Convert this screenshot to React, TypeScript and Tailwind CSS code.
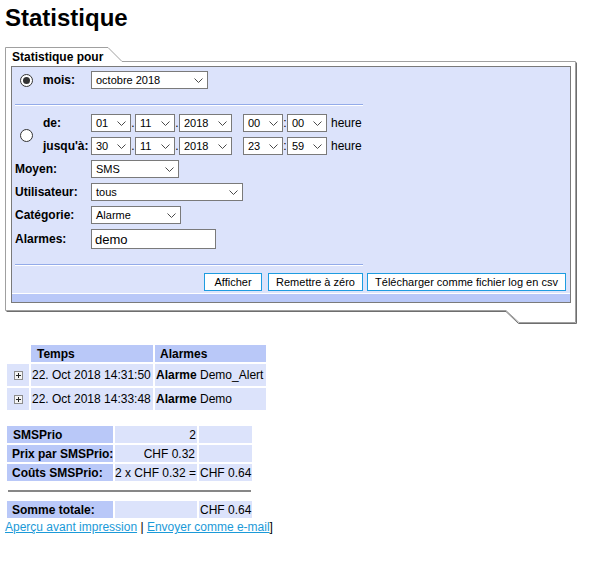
import React from "react";

function Chevron() {
  return (
    <svg width="9" height="5" viewBox="0 0 9 5" className="shrink-0">
      <path d="M0.5 0.5 L4.5 4.5 L8.5 0.5" stroke="#4a4a4a" strokeWidth="1" fill="none" />
    </svg>
  );
}

function Select({ value, className }: { value: string; className: string }) {
  return (
    <div
      className={`flex h-[18px] items-center justify-between border border-[#7a7a7a] bg-white pl-[4px] pr-[4px] text-[11px] leading-none ${className}`}
    >
      <span>{value}</span>
      <Chevron />
    </div>
  );
}

function Radio({ checked }: { checked?: boolean }) {
  return (
    <span className="ml-[8px] flex h-[13px] w-[13px] items-center justify-center rounded-full border border-[#333] bg-white">
      {checked && <span className="h-[7px] w-[7px] rounded-full bg-[#333]" />}
    </span>
  );
}

function Sep({ c }: { c: string }) {
  return <span className="w-[4px] text-center text-[12px] leading-none">{c}</span>;
}

function Label({ children }: { children: React.ReactNode }) {
  return <span className="w-[76px] text-[12px] font-bold leading-none">{children}</span>;
}

function Hr() {
  return <div className="ml-[3px] w-[348px] border-t border-b border-t-[#93abe9] border-b-white" />;
}

function DateRow({
  label,
  d,
  m,
  y,
  h,
  min,
}: {
  label: string;
  d: string;
  m: string;
  y: string;
  h: string;
  min: string;
}) {
  return (
    <div className="flex h-[18px] items-center">
      <span className="w-[48px] text-[12px] font-bold leading-none">{label}</span>
      <Select value={d} className="w-[40px]" />
      <Sep c="." />
      <Select value={m} className="w-[40px]" />
      <Sep c="." />
      <Select value={y} className="w-[53px]" />
      <Select value={h} className="ml-[11px] w-[40px]" />
      <Sep c=":" />
      <Select value={min} className="w-[40px]" />
      <span className="ml-[4px] text-[12px] leading-none">heure</span>
    </div>
  );
}

function PlusBox() {
  return (
    <span className="flex h-[9px] w-[9px] items-center justify-center border border-[#8c8c8c] bg-[#f4f4f4]">
      <svg width="7" height="7" viewBox="0 0 7 7">
        <path d="M1 3.5 H6 M3.5 1 V6" stroke="#222" strokeWidth="1" />
      </svg>
    </span>
  );
}

const head = "bg-[#b9c8f8] font-bold";
const cell = "bg-[#dce3fb]";

export default function App() {
  return (
    <div className="min-h-[563px] bg-white pl-[5px] text-black" style={{ fontFamily: '"Liberation Sans", Arial, sans-serif' }}>
      <h1 className="pt-[6px] text-[24px] font-bold leading-[24px]">Statistique</h1>

      <div className="relative mt-[17px] h-[277px] w-[574px]">
        <svg className="pointer-events-none absolute inset-0" width="574" height="278">
          <path
            d="M1.5 264.5 H501 L513.5 276.5 H571.5 V15.5"
            stroke="#6e6e6e"
            strokeWidth="1"
            fill="none"
          />
          <path
            d="M0.5 0.5 H103 L117 14.5 H570.5 V275.5 H514 L501 263.5 H0.5 Z"
            stroke="#a0a0a0"
            strokeWidth="1"
            fill="none"
          />
        </svg>
        <div className="h-[19px] pl-[7px] pt-[3px] text-[12px] font-bold leading-[14px]">Statistique pour</div>
        <div className="ml-[6px] w-[560px] border border-[#7a7a7a] bg-[#dce3fb]">
          <div className="pt-[4px]">
            <div className="flex h-[18px] items-center">
              <div className="flex w-[31px] items-center">
                <Radio checked />
              </div>
              <span className="w-[48px] text-[12px] font-bold leading-none">mois:</span>
              <Select value="octobre 2018" className="w-[117px]" />
            </div>
            <div className="mt-[15px]">
              <Hr />
            </div>
            <div className="mt-[8px] flex">
              <div className="flex w-[31px] items-center pt-[2px]">
                <Radio />
              </div>
              <div className="flex flex-col gap-[5px]">
                <DateRow label="de:" d="01" m="11" y="2018" h="00" min="00" />
                <DateRow label="jusqu'à:" d="30" m="11" y="2018" h="23" min="59" />
              </div>
            </div>
            <div className="mt-[5px] flex flex-col gap-[5px] pl-[3px]">
              <div className="flex h-[18px] items-center">
                <Label>Moyen:</Label>
                <Select value="SMS" className="w-[88px]" />
              </div>
              <div className="flex h-[18px] items-center">
                <Label>Utilisateur:</Label>
                <Select value="tous" className="w-[152px]" />
              </div>
              <div className="flex h-[18px] items-center">
                <Label>Catégorie:</Label>
                <Select value="Alarme" className="w-[90px]" />
              </div>
              <div className="flex h-[20px] items-center">
                <Label>Alarmes:</Label>
                <div className="flex h-[20px] w-[125px] items-center border border-[#7a7a7a] bg-white pl-[3px] text-[13px] leading-none">
                  demo
                </div>
              </div>
            </div>
            <div className="mt-[15px]">
              <Hr />
            </div>
            <div className="mt-[7px] flex justify-end whitespace-nowrap pr-[4px] text-[11px] leading-none">
              <button type="button" className="h-[18px] w-[58px] border border-[#1e9ce0] bg-white px-0">
                Afficher
              </button>
              <button type="button" className="ml-[6px] h-[18px] w-[95px] border border-[#1e9ce0] bg-white px-0">
                Remettre à zéro
              </button>
              <button type="button" className="ml-[4px] h-[18px] w-[199px] border border-[#1e9ce0] bg-white px-0">
                Télécharger comme fichier log en csv
              </button>
            </div>
            <div className="mt-[2px] h-[9px] border-t border-t-white bg-[#b9c8f8]" />
          </div>
        </div>
      </div>

      <div className="ml-[2px] mt-[21px] grid w-[259px] grid-cols-[22px_122px_111px] gap-[2px] text-[12px] leading-none">
        <div className="h-[17px]" />
        <div className={`flex h-[17px] items-center pl-[6px] ${head}`}>Temps</div>
        <div className={`flex h-[17px] items-center pl-[5px] ${head}`}>Alarmes</div>

        <div className={`flex h-[22px] items-center justify-center ${cell}`}>
          <PlusBox />
        </div>
        <div className={`flex h-[22px] items-center pl-[1px] ${cell}`}>22. Oct 2018 14:31:50</div>
        <div className={`flex h-[22px] items-center whitespace-nowrap pl-[1px] ${cell}`}>
          <b>Alarme</b>&nbsp;Demo_Alert
        </div>

        <div className={`flex h-[22px] items-center justify-center ${cell}`}>
          <PlusBox />
        </div>
        <div className={`flex h-[22px] items-center pl-[1px] ${cell}`}>22. Oct 2018 14:33:48</div>
        <div className={`flex h-[22px] items-center whitespace-nowrap pl-[1px] ${cell}`}>
          <b>Alarme</b>&nbsp;Demo
        </div>
      </div>

      <div className="ml-[2px] mt-[16px] grid w-[245px] grid-cols-[106px_82px_53px] gap-[2px] text-[12px] leading-none">
        <div className={`flex h-[17px] items-center pl-[6px] ${head}`}>SMSPrio</div>
        <div className={`flex h-[17px] items-center justify-end pr-[1px] ${cell}`}>2</div>
        <div className={`h-[17px] ${cell}`} />

        <div className={`flex h-[17px] items-center whitespace-nowrap pl-[5px] ${head}`}>Prix par SMSPrio:</div>
        <div className={`flex h-[17px] items-center justify-end pr-[2px] ${cell}`}>CHF 0.32</div>
        <div className={`h-[17px] ${cell}`} />

        <div className={`flex h-[17px] items-center whitespace-nowrap pl-[5px] ${head}`}>Coûts SMSPrio:</div>
        <div className={`flex h-[17px] items-center justify-end whitespace-nowrap pr-[1px] ${cell}`}>2 x CHF 0.32 =</div>
        <div className={`flex h-[17px] items-center pl-[1px] ${cell}`}>CHF 0.64</div>
      </div>

      <div className="ml-[3px] mt-[9px] h-[2px] w-[243px] bg-[#878787]" />

      <div className="ml-[2px] mt-[9px] grid w-[245px] grid-cols-[106px_82px_53px] gap-[2px] text-[12px] leading-none">
        <div className={`flex h-[17px] items-center whitespace-nowrap pl-[5px] ${head}`}>Somme totale:</div>
        <div className={`h-[17px] ${cell}`} />
        <div className={`flex h-[17px] items-center pl-[1px] ${cell}`}>CHF 0.64</div>
      </div>

      <div className="mt-[2px] text-[12px] leading-[14px]">
        <a href="#" className="text-[#1b9ad8] underline">
          Aperçu avant impression
        </a>{" "}
        |{" "}
        <a href="#" className="text-[#1b9ad8] underline">
          Envoyer comme e-mail
        </a>
        ]
      </div>
    </div>
  );
}
